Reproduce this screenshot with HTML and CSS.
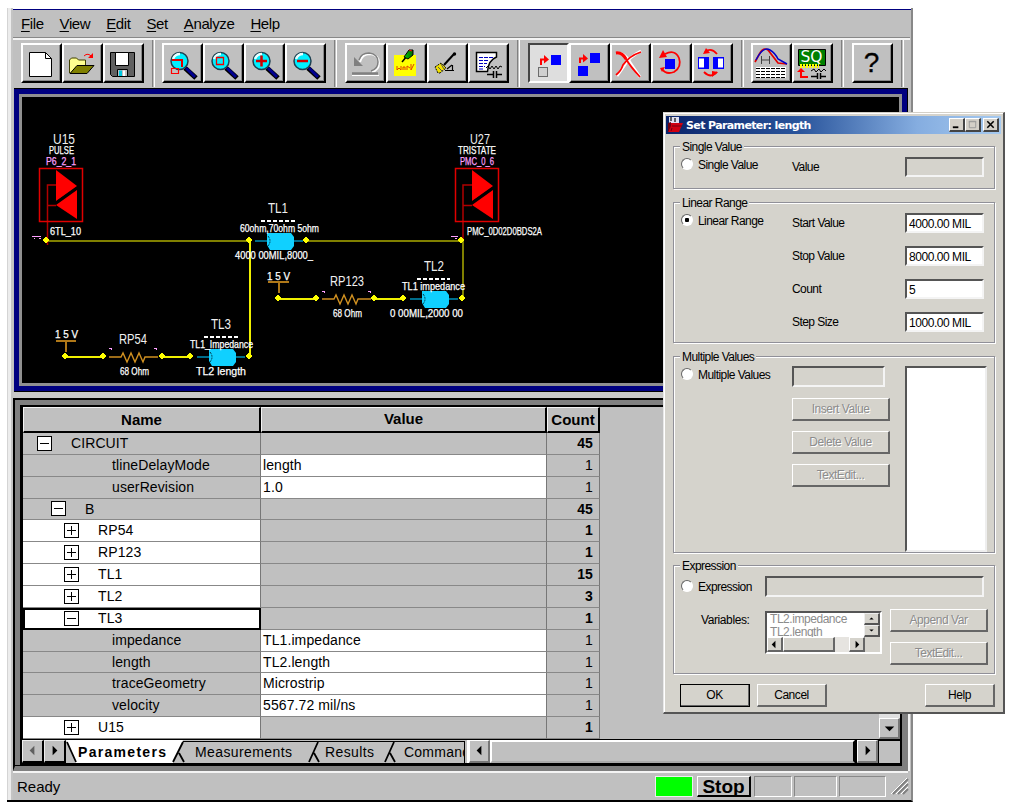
FILE: index.html
```html
<!DOCTYPE html>
<html lang="en">
<head>
<meta charset="utf-8">
<title>Set Parameter</title>
<link rel="stylesheet" href="styles.css">
</head>
<body>
<svg class="defs" width="0" height="0">
  <defs>
    <g id="lens">
      <path d="M23 24 L34 34" stroke="#000" stroke-width="5"/>
      <path d="M24 24 L33 33" stroke="#000090" stroke-width="3"/>
      <circle cx="17.500" cy="17" r="8.500" fill="#00f0ff" stroke="#204050" stroke-width="1.500"/>
      <path d="M11 15 q2 -5 7 -5" stroke="#e8ffff" stroke-width="2.500" fill="none"/>
    </g>
    <path id="node" d="M-1 -3 h2 v1 h1 v1 h1 v2 h-1 v1 h-1 v1 h-2 v-1 h-1 v-1 h-1 v-2 h1 v-1 h1z" fill="#ff0"/>
    <path id="zig" d="M0 0 H12 l2 -4 4 9 4 -9 4 9 4 -9 4 9 2 -5 H49" fill="none" stroke="#d09020" stroke-width="1.400"/>
    <g id="driver">
      <rect x="0.500" y="0.500" width="43" height="53" fill="none" stroke="#e00000" stroke-width="1.500"/>
      <path d="M17 2 V33 L38 18z M38 22 V51 L17 37z" fill="#f00"/>
      <path d="M17 34.500 L38 20" stroke="#000" stroke-width="2"/>
    </g>
    <g id="tline">
      <path d="M0 8 H12 M38 8 H48" stroke="#0090b8" stroke-width="1.500"/>
      <path d="M12 0 H36 L39 4 V13 L36 17 H15 L12 12z" fill="#10d0ff"/>
      <path d="M13 3 q4 5 0 10" stroke="#003848" fill="none" stroke-dasharray="2 1"/>
    </g>
    <linearGradient id="pin"><stop offset="0" stop-color="#0c0"/><stop offset="1" stop-color="#060"/></linearGradient>
  </defs>
</svg>

<div class="desktop">
<main class="window">
  <nav class="menu"><span><u>F</u>ile</span><span><u>V</u>iew</span><span><u>E</u>dit</span><span><u>S</u>et</span><span><u>A</u>nalyze</span><span><u>H</u>elp</span></nav>

  <div class="toolbar">
    <div class="tools">
      <button class="tool"><svg viewBox="21 44 41 39"><path d="M29.500 52.500 H45.500 L51.500 58.500 V76.500 H29.500z" fill="#fff" stroke="#000"/><path d="M45.500 52.500 V58.500 H51.500" fill="none" stroke="#000"/></svg></button>
      <button class="tool"><svg viewBox="62 44 41 39"><path d="M69.500 73 V60 l2 -2 h5 l2 2 h7 v5" fill="#ffff90" stroke="#404000"/><path d="M70 73.500 L77 65.500 H94 L87 73.500z" fill="#808000" stroke="#000"/><path d="M84 56 q4 -4 8 1" stroke="#f00" fill="none"/><path d="M88 58 h5 v-5z" fill="#f00"/></svg></button>
      <button class="tool"><svg viewBox="103 44 41 39"><path d="M110.500 52.500 H134.500 V76.500 H112.500 L110.500 74.500z" fill="#606060" stroke="#000"/><path d="M115.500 52.500 h13 v13 h-13z" fill="#fff" stroke="#000"/><path d="M117.500 69.500 h10 v7 h-10z" fill="#c0c0c0" stroke="#000"/><path d="M119 70.500 h3 v5.500 h-3z" fill="#00c8e0"/><path d="M123 70.500 h2 v5.500 h-2z" fill="#fff"/></svg></button>
    </div>
    <i class="split tight"></i>
    <div class="tools">
      <button class="tool"><svg viewBox="0 0 41 39"><use href="#lens"/><path d="M10 16 H20 V23" fill="none" stroke="#e00000" stroke-width="2"/><path d="M9.500 24.500 h7 v5 h-7z" fill="none" stroke="#f00" stroke-width="1.200"/></svg></button>
      <button class="tool"><svg viewBox="0 0 41 39"><use href="#lens"/><path d="M13.500 13.500 h7 v7 h-7z" fill="none" stroke="#f00000" stroke-width="1.300"/></svg></button>
      <button class="tool"><svg viewBox="0 0 41 39"><use href="#lens"/><path d="M12 17 H23 M17.500 11.500 V22.500" stroke="#d00000" stroke-width="2.500"/></svg></button>
      <button class="tool"><svg viewBox="0 0 41 39"><use href="#lens"/><path d="M12 17 H23" stroke="#d00000" stroke-width="2.500"/></svg></button>
    </div>
    <i class="split"></i>
    <div class="tools">
      <button class="tool"><svg viewBox="345 44 41 39"><path d="M359 61 q2 -8 10 -8 q9 1 9 9 q0 7 -7 9" fill="none" stroke="#fff" stroke-width="2" transform="translate(1 1)"/><path d="M359 60 q2 -7 10 -7 q9 1 9 9 q0 7 -7 9" fill="none" stroke="#808080" stroke-width="1.500"/><path d="M354 57 V66 H363z" fill="#808080"/><path d="M352 75.500 H379" stroke="#fff"/><path d="M352 73.500 H378" stroke="#808080" stroke-width="2.500"/></svg></button>
      <button class="tool"><svg viewBox="386 44 41 39"><path d="M394 55 h22 v21 h-22z" fill="#ff0"/><path d="M397 66 v4 l2 -2 2 2 v-4 M403 70 v-3 h2 v3 M407 70 v-4 l3 2 M411 64 v6 l3 -6" stroke="#e04000" fill="none"/><path d="M402 62 L407 56" stroke="#000" stroke-width="1.500"/><path d="M404 57 l5 -7 h4 v5 l-5 4z" fill="url(#pin)" stroke="#000"/><path d="M409 50 l3 1" stroke="#f00"/></svg></button>
      <button class="tool"><svg viewBox="427 44 41 39"><path d="M444 65 L454 54" stroke="#000" stroke-width="2"/><circle cx="454.500" cy="54" r="1.700"/><path d="M435 67 l6 -4 5 5 -6 5 -2 0z" fill="#f0e000" stroke="#000" stroke-dasharray="2 1"/><path d="M438 67 l4 4 M441 64 l3 5" stroke="#555"/><path d="M445 70.500 H454 M452.500 65 V71 M447 69 l5 -4" fill="none" stroke="#000" stroke-width="1.200"/></svg></button>
      <button class="tool"><svg viewBox="468 44 41 39"><path d="M476.500 52.500 H496.500 V57 q-8 3 -9 14.500 H476.500z" fill="#fff" stroke="#000" stroke-width="1.500"/><path d="M479 57.500 H493 M479 60.500 H489 M479 63.500 H487 M479 66.500 H485 M479 69 H484" stroke="#0000c0" stroke-dasharray="4 1"/><path d="M486 68 l2 -2 2 3 2 -3 2 3 2 -3 2 3 2 -3 2 1" fill="none" stroke="#000"/><path d="M487 74.500 H493 M493.500 71 V78 M496.500 71 V78 M497 74.500 H502" stroke="#000" stroke-width="1.500"/></svg></button>
    </div>
    <i class="split"></i>
    <div class="tools">
      <button class="tool pressed"><svg viewBox="528 44 41 39"><path d="M551 55 h10 v10 h-10z" fill="#00f"/><path d="M541 65 V59.500 H545" fill="none" stroke="#f00" stroke-width="2"/><path d="M544 55 l5 4.500 -5 4z" fill="#f00"/><path d="M538.500 67.500 h9 v9 h-9z" fill="#d0d0d0" stroke="#000" stroke-dasharray="1 1"/></svg></button>
      <button class="tool"><svg viewBox="569 44 41 39"><path d="M590 53 h10 v10 h-10z M578 66 h10 v10 h-10z" fill="#00f"/><path d="M580 63 V58.500 H584" fill="none" stroke="#f00" stroke-width="2"/><path d="M583 54 l5 4.500 -5 4z" fill="#f00"/></svg></button>
      <button class="tool"><svg viewBox="610 44 41 39"><path d="M617 53 q9 0 14 11 l9 13 M641 51 q-12 6 -17 15 l-7 10" fill="none" stroke="#fff" stroke-width="3"/><path d="M616 53 q6 -1 10 6 t14 18 M641 52 q-12 4 -18 13 q-2 6 -7 10" fill="none" stroke="#f00" stroke-width="1.800"/><path d="M616 53 q6 -1 10 6" fill="none" stroke="#f00" stroke-width="3"/></svg></button>
      <button class="tool"><svg viewBox="651 44 41 39"><path d="M665 59 h10 v10 h-10z" fill="#00f"/><path d="M665 54 q10 -5 14 4 q3 9 -5 14 q-8 3 -12 -3" fill="none" stroke="#f00" stroke-width="1.800"/><path d="M659 58 l4 -8 4 7z M660 68 l5 -1 -3 5z" fill="#f00"/></svg></button>
      <button class="tool"><svg viewBox="692 44 41 39"><path d="M698 57 h11 v12 h-11z M713 57 h11 v12 h-11z" fill="#00f"/><path d="M699 58.500 h5 v9 h-5z M718 58.500 h5 v9 h-5z" fill="#fff"/><path d="M705 52 q6 -5 12 2 M704 72 q7 7 13 0" fill="none" stroke="#f00" stroke-width="1.800"/><path d="M703 54 l3 -6 4 5z M712 77 v-6 l6 1z" fill="#f00"/></svg></button>
    </div>
    <i class="split tight"></i>
    <div class="tools">
      <button class="tool"><svg viewBox="751 44 41 39"><path d="M755 62 l5 -9 q3 -6 8 -3 l10 13 9 1" fill="none" stroke="#e00000" stroke-width="1.700"/><path d="M756 60 q7 -14 14 -10 q5 3 8 9 l9 5" fill="none" stroke="#00c" stroke-width="1.500"/><path d="M761.500 56 v8 M769.500 56 v8 M762 60 h7" stroke="#444"/><path d="M756 67 h30 v11 h-30z" fill="#fff"/><path d="M756 68.500 h30 M756 71.500 h30 M756 74.500 h30 M756 77.500 h30" stroke="#000" stroke-dasharray="4 1"/></svg></button>
      <button class="tool"><svg viewBox="792 44 41 39"><path d="M798.500 49.500 h27 v16 h-27z" fill="#008000" stroke="#000"/><path d="M800 66 h19" stroke="#ff0" stroke-width="4" stroke-dasharray="2 1"/><text class="chip" x="800.500" y="61.500" textLength="22" lengthAdjust="spacingAndGlyphs">SQ</text><path d="M801 71 V77 H808" fill="none" stroke="#f00" stroke-width="2"/><path d="M797 72 l4 -4 4 4z" fill="#f00"/><path d="M811 71 l3 -2 2 3 3 -3 2 3 3 -3 2 2" fill="none" stroke="#000"/><path d="M811 76.500 H817 M817.500 73 v6 M820.500 73 v6 M821 76.500 h5" stroke="#000" stroke-width="1.500"/></svg></button>
    </div>
    <i class="split"></i>
    <div class="tools">
      <button class="tool help">?</button>
    </div>
    <i class="split last"></i>
  </div>

  <section class="canvas">
    <svg viewBox="22 97 877 286" width="877" height="286">
      <g stroke="#808000" stroke-width="2" fill="none" shape-rendering="crispEdges">
        <path d="M46 241 H249 M306 241 H463 M463 241 V298"/>
        <path d="M250 241 V356 M278 299 H316 M374 299 H403 M65 357 H103 M162 357 H190" stroke="#f0f000"/>
        <path d="M268 282 H289 M279 282 V293 M56 341 H76 M66 341 V352" stroke="#b07818"/>
      </g>
      <g stroke="#b00000" stroke-width="1.500" fill="none">
        <path d="M56 185 H47.500 V245 M47 205.500 H56 M472 185 H463 V239 M463 205.500 H472"/>
      </g>
      <use href="#driver" x="39" y="168"/><use href="#driver" x="455" y="168"/>
      <use href="#tline" x="255" y="233"/><use href="#tline" x="410" y="291"/><use href="#tline" x="197" y="349"/>
      <use href="#zig" x="322" y="299"/><use href="#zig" x="109" y="357"/>
      <use href="#node" x="46" y="240"/><use href="#node" x="249" y="240"/><use href="#node" x="306" y="240"/><use href="#node" x="461" y="240"/>
      <use href="#node" x="278" y="298"/><use href="#node" x="316" y="298"/><use href="#node" x="374" y="298"/><use href="#node" x="403" y="298"/><use href="#node" x="462" y="298"/>
      <use href="#node" x="65" y="356"/><use href="#node" x="103" y="356"/><use href="#node" x="162" y="356"/><use href="#node" x="190" y="356"/><use href="#node" x="249" y="356"/>
      <path d="M261 221 H295 M417 279 H450 M204 337 H238" stroke="#fff" stroke-width="2" stroke-dasharray="4 2"/>
      <path d="M32 236.500 h9 M34 238.500 h1 M39 238.500 h2 M451 236.500 h7 M455 238.500 h2" stroke="#ffa0ff"/>
      <path d="M322 291 h3 v2 h-1 v-1 h-2z M368 291 h3 v2 h-1 v-1 h-2z M109 348 h3 v2 h-1 v-1 h-2z M154 348 h3 v2 h-1 v-1 h-2z" fill="#ffa0ff"/>
      <g class="big">
        <text x="53" y="144" textLength="22" lengthAdjust="spacingAndGlyphs">U15</text>
        <text x="470" y="144" textLength="20" lengthAdjust="spacingAndGlyphs">U27</text>
        <text x="268" y="213" textLength="20" lengthAdjust="spacingAndGlyphs">TL1</text>
        <text x="330" y="286" textLength="34" lengthAdjust="spacingAndGlyphs">RP123</text>
        <text x="424" y="271" textLength="20" lengthAdjust="spacingAndGlyphs">TL2</text>
        <text x="119" y="344" textLength="28" lengthAdjust="spacingAndGlyphs">RP54</text>
        <text x="211" y="329" textLength="20" lengthAdjust="spacingAndGlyphs">TL3</text>
      </g>
      <g class="small">
        <text x="49" y="154" textLength="25" lengthAdjust="spacingAndGlyphs">PULSE</text>
        <text class="pink" x="46" y="165" textLength="30" lengthAdjust="spacingAndGlyphs">P6_2_1</text>
        <text x="50" y="235" textLength="31" lengthAdjust="spacingAndGlyphs">6TL_10</text>
        <text x="458" y="154" textLength="38" lengthAdjust="spacingAndGlyphs">TRISTATE</text>
        <text class="pink" x="460" y="165" textLength="34" lengthAdjust="spacingAndGlyphs">PMC_0_6</text>
        <text x="467" y="235" textLength="75" lengthAdjust="spacingAndGlyphs">PMC_0D02D0BDS2A</text>
        <text x="240" y="232" textLength="79" lengthAdjust="spacingAndGlyphs">60ohm,70ohm 5ohm</text>
        <text x="235" y="259" textLength="78" lengthAdjust="spacingAndGlyphs">4000 00MIL,8000_</text>
        <text x="267" y="280" textLength="23" lengthAdjust="spacingAndGlyphs">1 5 V</text>
        <text x="333" y="317" textLength="29" lengthAdjust="spacingAndGlyphs">68 Ohm</text>
        <text x="402" y="290" textLength="63" lengthAdjust="spacingAndGlyphs">TL1 impedance</text>
        <text x="390" y="317" textLength="73" lengthAdjust="spacingAndGlyphs">0 00MIL,2000 00</text>
        <text x="55" y="338" textLength="23" lengthAdjust="spacingAndGlyphs">1 5 V</text>
        <text x="120" y="375" textLength="29" lengthAdjust="spacingAndGlyphs">68 Ohm</text>
        <text x="190" y="348" textLength="63" lengthAdjust="spacingAndGlyphs">TL1_Impedance</text>
        <text x="196" y="375" textLength="50" lengthAdjust="spacingAndGlyphs">TL2 length</text>
      </g>
    </svg>
  </section>

  <section class="sheet">
    <div class="sheet-body">
      <div class="grid">
        <b class="th">Name</b><b class="th mid">Value</b><b class="th">Count</b>
        <div class="n l0"><i class="box"></i>CIRCUIT</div><div></div><b>45</b>
        <div class="n leaf">tlineDelayMode</div><div class="w">length</div><span>1</span>
        <div class="n leaf">userRevision</div><div class="w">1.0</div><span>1</span>
        <div class="n l1"><i class="box"></i>B</div><div></div><b>45</b>
        <div class="n l2 w"><i class="box plus"></i>RP54</div><div></div><b>1</b>
        <div class="n l2 w"><i class="box plus"></i>RP123</div><div></div><b>1</b>
        <div class="n l2 w"><i class="box plus"></i>TL1</div><div></div><b>15</b>
        <div class="n l2 w"><i class="box plus"></i>TL2</div><div></div><b>3</b>
        <div class="n l2 w sel"><i class="box"></i>TL3</div><div></div><b>1</b>
        <div class="n leaf">impedance</div><div class="w">TL1.impedance</div><span>1</span>
        <div class="n leaf">length</div><div class="w">TL2.length</div><span>1</span>
        <div class="n leaf">traceGeometry</div><div class="w">Microstrip</div><span>1</span>
        <div class="n leaf">velocity</div><div class="w">5567.72 mil/ns</div><span>1</span>
        <div class="n l2 w"><i class="box plus"></i>U15</div><div></div><b>1</b>
      </div>
      <div class="vscroll"><div class="sbtn"><svg viewBox="0 0 20 20"><path d="M5 8 h10 l-5 5z"/></svg></div></div>
    </div>
    <div class="tabbar">
      <div class="sbtn nav"><svg viewBox="0 0 20 20"><path d="M12 5 v10 l-5 -5z" fill="#606060"/></svg></div>
      <div class="sbtn nav"><svg viewBox="0 0 20 20"><path d="M8 5 v10 l5 -5z"/></svg></div>
      <svg class="tabs" viewBox="66 740 399 23" width="399" height="23">
        <path d="M66 740 H465 V763 H66z" fill="#c0c0c0"/>
        <path d="M66 740 H183 L173 763 H76z" fill="#fff"/>
        <path d="M183 741.500 H465 M464.500 741 V763" stroke="#000" fill="none"/>
        <path d="M67 742 L76 762 M183 742 L173 762 M179 753 L184 762 M318 742 L309 762 M314 753 L319 762 M394 742 L385 762 M390 753 L395 762" stroke="#000" stroke-width="1.800"/>
        <g class="tabtext">
          <text class="bold" x="78" y="757" textLength="88">Parameters</text>
          <text x="195" y="757" textLength="97">Measurements</text>
          <text x="325" y="757" textLength="49">Results</text>
          <text x="404" y="757" textLength="66">Command</text>
        </g>
        <path d="M464.500 741 V763" stroke="#000"/>
      </svg>
      <i class="grab"></i>
      <div class="sbtn"><svg viewBox="0 0 20 20"><path d="M12 5 v10 l-5 -5z"/></svg></div>
      <div class="thumb"></div>
      <div class="sbtn end"><svg viewBox="0 0 20 20"><path d="M8 5 v10 l5 -5z"/></svg></div>
      <div class="corner"></div>
    </div>
  </section>

  <footer class="status">
    <span class="ready">Ready</span>
    <i class="led"></i><b class="stop">Stop</b><i class="pane p1"></i><i class="pane p2"></i><i class="pane p3"></i>
    <svg class="grip" width="18" height="18" viewBox="0 0 18 18"><path d="M2 17 L17 2 M7 17 L17 7 M12 17 L17 12" stroke="#808080" stroke-width="2"/><path d="M0 17 L16 1 M5 17 L17 5 M10 17 L17 10" stroke="#fff"/></svg>
  </footer>
</main>

<aside class="dialog">
  <header class="title">
    <svg width="17" height="16" viewBox="0 0 17 16"><path d="M2 0 h10 v6 h-10z" fill="#e0e0f0"/><path d="M4 0 v4 M8 1 v4" stroke="#333" stroke-width="1.500"/><path d="M4 6 H16 L12 15 H1z" fill="#d00010"/><path d="M1 6 l3 -1 v4 l-3 6z" fill="#700010"/><path d="M5 9 H15 M4 14 l1 -3" stroke="#700010"/></svg>
    <b>Set Parameter: length</b>
    <span class="cap"><svg viewBox="0 0 14 12"><path d="M3 9 h6" stroke="#000" stroke-width="2"/></svg></span>
    <span class="cap"><svg viewBox="0 0 14 12"><path d="M3.500 2.500 h7 v7 h-7z" fill="none" stroke="#999"/><path d="M3 3 h8" stroke="#999"/></svg></span>
    <span class="cap x"><svg viewBox="0 0 14 12"><path d="M3.500 2.500 l7 7 M10.500 2.500 l-7 7" stroke="#000" stroke-width="1.700"/></svg></span>
  </header>

  <section class="group g1"><div class="legend">Single Value</div>
    <div class="row"><label class="radio"><i></i>Single Value</label><span class="lab">Value</span><span class="field off"></span></div>
  </section>
  <section class="group g2"><div class="legend">Linear Range</div>
    <div class="row"><label class="radio"><i class="on"></i>Linear Range</label><span class="lab">Start Value</span><span class="field">4000.00 MIL</span></div>
    <div class="row"><span></span><span class="lab">Stop Value</span><span class="field">8000.00 MIL</span></div>
    <div class="row"><span></span><span class="lab">Count</span><span class="field">5</span></div>
    <div class="row"><span></span><span class="lab">Step Size</span><span class="field">1000.00 MIL</span></div>
  </section>
  <section class="group g3"><div class="legend">Multiple Values</div>
    <div class="multi"><label class="radio"><i></i>Multiple Values</label>
      <div class="stack"><span class="field off"></span><span class="btn dis">Insert Value</span><span class="btn dis">Delete Value</span><span class="btn dis">TextEdit...</span></div>
      <div class="list"></div></div>
  </section>
  <section class="group g4"><div class="legend">Expression</div>
    <div class="expr"><label class="radio"><i></i>Expression</label><span class="field off"></span></div>
    <div class="vars"><span class="varlab">Variables:</span>
      <div class="varlist">
        <div class="varrow"><div class="items"><div>TL2.impedance</div><div>TL2.length</div></div>
          <div class="vs"><div class="mini"><svg viewBox="0 0 12 8"><path d="M4 5 h4 l-2 -2z"/></svg></div><div class="mini"><svg viewBox="0 0 12 8"><path d="M4 3 h4 l-2 2z"/></svg></div></div></div>
        <div class="hs"><div class="mini2"><svg viewBox="0 0 14 14"><path d="M8 3 v8 l-4 -4z"/></svg></div><div class="mini2 wide"></div><i></i><div class="mini2"><svg viewBox="0 0 14 14"><path d="M6 3 v8 l4 -4z"/></svg></div></div>
      </div>
      <div class="side"><span class="btn dis">Append Var</span><span class="btn dis">TextEdit...</span></div>
    </div>
  </section>
  <div class="actions"><span class="btn ok">OK</span><span class="btn">Cancel</span><span class="btn helpbtn">Help</span></div>
</aside>
</div>
</body>
</html>
```
FILE: styles.css
```css
* { box-sizing: border-box; }
body { margin: 0; background: #fff; font-family: "Liberation Sans", Arial, sans-serif; color: #000; overflow: hidden; }
.defs { display: block; height: 0; }
.desktop { position: relative; width: 1013px; height: 807px; padding: 8px 0 0 7px; }

/* Main window */
.window {
  width: 906px; height: 794px; padding: 2px 1px 0 6px; background: #c0c0c0;
  border-right: 2px solid #888; border-bottom: 2px solid #000;
  background-image: linear-gradient(90deg, #d4d4d4 0 1px, #ececec 1px 4px, #c4c4c4 4px 6px, transparent 6px), linear-gradient(#fff 0 1px, #000080 1px 2px, transparent 2px);
}
.menu { display: flex; gap: 16px; height: 28px; padding: 4px 0 0 8px; font-size: 15px; line-height: 20px; letter-spacing: -0.400px; border-bottom: 1px solid #888; }
.menu u { text-underline-offset: 2px; text-decoration-thickness: 1px; }

.toolbar { display: flex; height: 50px; border-top: 2px solid #f4f4f4; padding: 3px 0 0 8px; }
.tools { display: flex; height: 40px; }
.tool { width: 41px; height: 40px; padding: 0; border: solid; border-width: 2px; border-color: #fff #000 #000 #fff; background: #c0c0c0; box-shadow: inset -1px -1px #888; }
.tool svg { display: block; width: 41px; height: 39px; margin: -2px; }
.tool.pressed { background: #dedede; border-color: #444 #fff #fff #444; box-shadow: none; }
.tool.help { font: 28px/36px "Liberation Sans", Arial, sans-serif; -webkit-text-stroke: 0.300px #000; padding-right: 2px; }
.chip { font: 15px "DejaVu Sans", sans-serif; fill: #fff; }
.split { width: 3px; height: 47px; margin: -3px 8px 0 8px; border-left: 1px solid #808080; border-right: 1px solid #fff; }
.split.tight { margin-right: 7px; }
.split.last { margin-right: 0; }

.canvas { width: 894px; height: 304px; background: #000; border: solid #000; border-width: 3px 0 0 1px; margin-left: 1px; }
.canvas svg { display: block; box-sizing: content-box; border: 3px solid #909090; outline: 5px solid #000080; outline-offset: 0; margin: 3px 0 0 4px; }
.big { font-size: 14.500px; fill: #f0f0f0; }
.small { font-size: 10.500px; fill: #fff; stroke: #fff; stroke-width: 0.250px; }
.small .pink { fill: #ffa0ff; stroke: #ffa0ff; }

/* Parameter sheet */
.sheet { width: 895px; height: 373px; margin-top: 6px; border: solid; border-color: #000 #808080 #808080 #000; border-width: 2px 6px 5px 2px; background: #000; box-shadow: 0 -6px 0 #c8c8c8, 0 2px #f4f4f4, 2px 0 #f4f4f4; }
.sheet-body { display: flex; height: 339px; border-top: 5px solid #808080; border-left: 5px solid #808080; padding: 2px 2px 0 3px; background: #000; }
.grid {
  display: grid; grid-template-columns: 238px 286px 53px; grid-template-rows: 26px repeat(14, 1fr);
  flex: 1; height: 332px; background: #c0c0c0; font-size: 14px; line-height: 19px;
}
.grid > * { border-right: 1px solid #777; border-bottom: 1px solid #888; padding: 1px 2px; letter-spacing: 0.100px; min-height: 0; }
.grid > .w { background: #fff; }
.grid > b, .grid > span { text-align: right; padding-right: 6px; }
.grid > .th { text-align: center; font-size: 15px; line-height: 24px; padding: 0 2px; border: solid; border-width: 1px 2px 2px 1px; border-color: #f4f4f4 #000 #000 #f4f4f4; letter-spacing: 0; }
.grid > .mid { line-height: 22px; }
.n { display: flex; align-items: center; }
.grid > .l0 { padding-left: 14px; }
.grid > .l1 { padding-left: 28px; }
.grid > .l2 { padding-left: 41px; }
.grid > .leaf { padding-left: 89px; }
.grid > .sel { border: 2px solid #000; padding-left: 39px; }
.box { width: 15px; height: 15px; margin-right: 19px; border: 1px solid #000; background: linear-gradient(#000, #000) center / 9px 1px no-repeat #fff; flex: none; }
.box.plus { background: linear-gradient(#000, #000) center / 9px 1px no-repeat, linear-gradient(#000, #000) center / 1px 9px no-repeat #fff; }
.vscroll { width: 21px; height: 332px; background: #e0e0e0; display: flex; align-items: flex-end; }
.sbtn { width: 21px; height: 21px; flex: none; background: #c0c0c0; border: solid; border-width: 1px 2px 2px 1px; border-color: #fff #777 #777 #fff; }
.sbtn svg { display: block; width: 19px; height: 19px; }
.tabbar { display: flex; height: 26px; padding: 1px 2px 2px 2px; border-left: 5px solid #808080; }
.tabbar .sbtn { height: 23px; }
.tabbar .nav { width: 22px; border-color: #eee #000 #000 #eee; }
.tabs { flex: none; display: block; }
.tabtext { font-size: 14px; }
.tabtext .bold { font-weight: bold; }
.grab { width: 4px; height: 23px; background: #c0c0c0; border-right: 2px solid #fff; }
.thumb { flex: 1; height: 23px; background: #c0c0c0; border: solid; border-width: 2px; border-color: #fff #000 #aaa #fff; }
.end { margin-left: 2px; }
.corner { width: 21px; height: 22px; background: #c0c0c0; margin: 1px 0 0 1px; }

.status { display: flex; align-items: center; height: 26px; margin-top: 2px; padding: 0 1px 0 4px; }
.ready { flex: 1; font-size: 15px; }
.led { width: 38px; height: 21px; background: #0f0; border: 1px solid #eee; }
.stop { width: 54px; height: 21px; margin: 0 3px 0 4px; text-align: center; font-size: 19px; line-height: 20px; border: solid; border-width: 1px 2px 2px 1px; border-color: #fff #000 #000 #fff; }
.pane { width: 38px; height: 21px; margin-right: 2px; border: solid 1px; border-color: #888 #fff #fff #888; }
.p2 { width: 43px; }
.p3 { width: 47px; margin-right: 5px; }

/* Dialog */
.dialog {
  position: absolute; left: 663px; top: 112px; width: 342px; height: 602px; padding: 3px 8px 0 9px; background: #d5d3cc;
  border: solid; border-width: 1px 2px 2px 1px; border-color: #d4d0c8 #555 #555 #e8e8e8; box-shadow: inset 1px 1px #fff;
  font-size: 12px; line-height: 14px; letter-spacing: -0.550px;
}
.title { display: flex; align-items: center; height: 18px; margin: 0 -6px 0 -7px; padding: 0 2px 0 1px; color: #fff; background: linear-gradient(90deg, #0a246a, #2a559c 40%, #85ade0 75%, #a6caf0); }
.title b { flex: 1; font: bold 11px "DejaVu Sans", sans-serif; letter-spacing: -0.620px; padding-left: 2px; }
.cap { width: 16px; height: 14px; background: #d4d0c8; border: solid; border-width: 1px 2px 2px 1px; border-color: #fff #444 #444 #fff; }
.cap svg { display: block; width: 13px; height: 11px; }
.cap.x { margin-left: 2px; }
.group { border: 1px solid #909098; box-shadow: 1px 1px #fff, inset 1px 1px #fff; }
.legend { width: fit-content; margin: -7px 0 0 6px; padding: 0 2px; background: #d5d3cc; position: relative; }
.g1 { height: 43px; margin-top: 12px; }
.g2 { height: 141px; margin-top: 13px; }
.g3 { height: 197px; margin-top: 13px; }
.g4 { height: 109px; margin-top: 12px; }
.row { display: grid; grid-template-columns: 118px 113px 79px; height: 20px; margin-bottom: 13px; margin-top: 3px; align-items: center; }
.row + .row { margin-top: 0; }
.radio { display: flex; align-items: flex-start; gap: 5px; padding-left: 7px; width: 118px; height: 20px; padding-top: 1px; flex: none; }
.radio i { width: 12px; height: 12px; margin: 0; border-radius: 50%; border: 1.500px solid; border-color: #666 #fff #fff #666; background: #fff; }
.radio .on { background: radial-gradient(circle, #000 0 2px, #fff 2.500px); }
.field { display: block; height: 20px; padding: 2px 2px 0; background: #fff; border: solid; border-width: 2px; border-color: #555 #f4f4f4 #f4f4f4 #555; line-height: 15px; }
.row .field { letter-spacing: -0.450px; }
.field.off { background: #d5d3cc; }
.multi { display: flex; padding-top: 2px; }
.multi .radio { width: 118px; padding-top: 2px; }
.stack { display: flex; flex-direction: column; width: 99px; margin-right: 14px; flex: none; }
.stack .field { width: 93px; height: 21px; margin: 0 0 11px; }
.btn { display: block; height: 23px; line-height: 20px; text-align: center; border: solid; border-width: 1px 2px 2px 1px; border-color: #fff #666 #666 #fff; letter-spacing: -0.450px; }
.dis { color: #8c8c8c; text-shadow: 1px 1px #fff; }
.stack .btn { width: 98px; margin-bottom: 10px; }
.list { width: 82px; height: 186px; background: #fff; border: 2px solid; border-color: #555 #eee #eee #555; }
.expr { display: flex; padding-top: 3px; }
.expr .radio { width: 91px; padding-top: 4px; }
.expr .field { width: 219px; height: 21px; }
.vars { display: flex; padding-top: 12px; }
.varlab { width: 91px; padding: 4px 0 0 27px; flex: none; letter-spacing: -0.400px; }
.varlist { width: 117px; height: 43px; margin-top: 2px; border: 2px solid; border-color: #555 #fff #fff #555; flex: none; }
.varrow { display: flex; height: 24px; }
.items { flex: 1; overflow: hidden; background: #fff; color: #8c8c8c; padding-left: 3px; line-height: 13px; letter-spacing: -0.450px; }
.vs { width: 16px; flex: none; }
.mini { height: 12px; border: solid; border-width: 1px 2px 2px 1px; border-color: #eee #555 #555 #eee; }
.mini svg { display: block; width: 13px; height: 9px; }
.hs { display: flex; width: 98px; height: 15px; }
.hs i { flex: 1; background: #e6e4e0; }
.mini2 { width: 16px; border: solid; border-width: 1px 2px 2px 1px; border-color: #fff #666 #666 #fff; }
.mini2 svg { display: block; width: 13px; height: 13px; }
.mini2.wide { width: 52px; }
.side { width: 98px; margin-left: 8px; flex: none; }
.side .btn { width: 98px; margin-bottom: 10px; }
.actions { display: flex; gap: 7px; margin-top: 10px; padding-left: 7px; }
.actions .btn { width: 70px; }
.actions .ok { outline: 1px solid #000; outline-offset: -1px; }
.actions .helpbtn { margin-left: auto; }
```
